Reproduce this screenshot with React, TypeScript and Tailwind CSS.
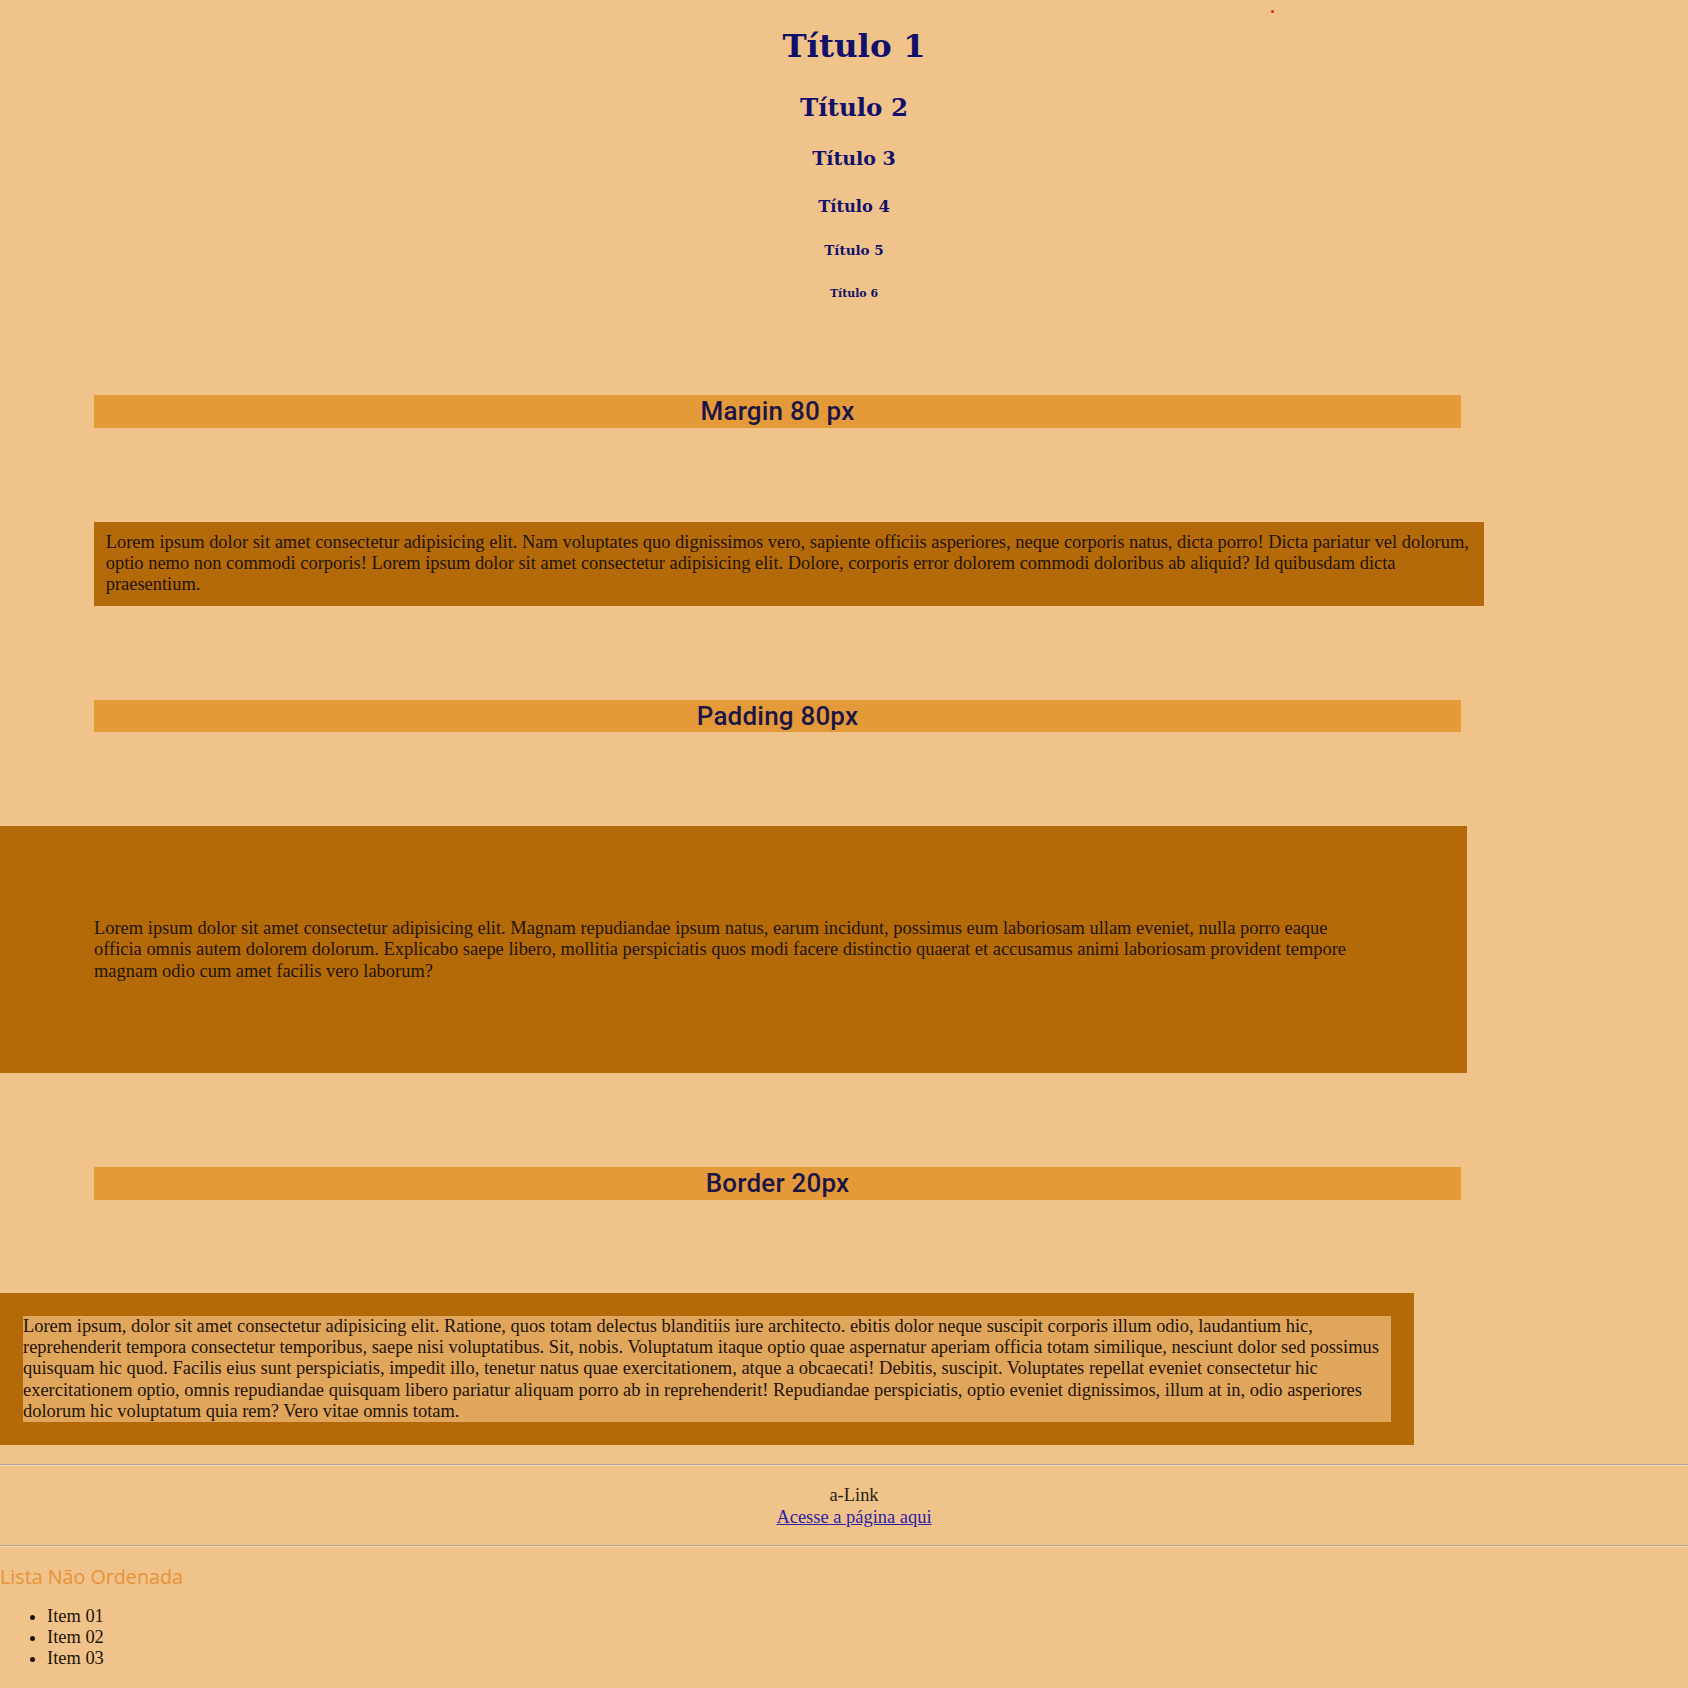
import React from "react";

const headings = [
  { tag: "h1", text: "Título 1", cls: "mt-[24px] text-[32.5px] leading-[43px]" },
  { tag: "h2", text: "Título 2", cls: "mt-[25px] text-[24.5px] leading-[32px]" },
  { tag: "h3", text: "Título 3", cls: "mt-[21.5px] text-[19px] leading-[25px]" },
  { tag: "h4", text: "Título 4", cls: "mt-[25px] text-[16.3px] leading-[21px]" },
  { tag: "h5", text: "Título 5", cls: "mt-[24.5px] text-[13.5px] leading-[18px]" },
  { tag: "h6", text: "Título 6", cls: "mt-[28px] text-[10.9px] leading-[14px]" },
];

const serif = "font-['Liberation_Serif','Times_New_Roman',serif]";

function Bar({ label }: { label: string }) {
  return (
    <h2 className="mt-[94px] ml-[94px] w-[1367px] h-[32.5px] bg-[#e59a3a] flex items-center justify-center font-['Roboto','Liberation_Sans',Arial,sans-serif] font-medium text-[26px] tracking-[0.2px] text-[#1d1545]">
      {label}
    </h2>
  );
}

export default function App() {
  return (
    <div className={`relative flow-root min-h-screen bg-[#efc389] text-[#1f1409] text-[18.45px] leading-[21.3px] ${serif}`}>
      {/* stray red dot */}
      <span className="absolute top-[10px] left-[1271px] w-[3px] h-[3px] rounded-full bg-[#e02020]" />

      {/* Headings */}
      <div className="pl-[20px] text-center font-['DejaVu_Serif',Georgia,serif] font-bold text-[#12106a]">
        {headings.map((h) => {
          const Tag = h.tag as any;
          return (
            <Tag key={h.text} className={h.cls}>
              {h.text}
            </Tag>
          );
        })}
      </div>

      <Bar label="Margin 80 px" />
      <p className="mt-[94px] ml-[94px] w-[1390px] px-[11.7px] py-[10.3px] bg-[#b46a08]">
        Lorem ipsum dolor sit amet consectetur adipisicing elit. Nam voluptates quo dignissimos vero, sapiente officiis
        asperiores, neque corporis natus, dicta porro! Dicta pariatur vel dolorum, optio nemo non commodi corporis! Lorem
        ipsum dolor sit amet consectetur adipisicing elit. Dolore, corporis error dolorem commodi doloribus ab aliquid? Id
        quibusdam dicta praesentium.
      </p>

      <Bar label="Padding 80px" />
      <p className="mt-[94px] w-[1467px] px-[94px] py-[91.5px] bg-[#b46a08]">
        Lorem ipsum dolor sit amet consectetur adipisicing elit. Magnam repudiandae ipsum natus, earum incidunt,
        possimus eum laboriosam ullam eveniet, nulla porro eaque officia omnis autem dolorem dolorum. Explicabo saepe
        libero, mollitia perspiciatis quos modi facere distinctio quaerat et accusamus animi laboriosam provident tempore
        magnam odio cum amet facilis vero laborum?
      </p>

      <Bar label="Border 20px" />
      <p className="mt-[93px] w-[1414px] border-[23.4px] border-[#b46a08] bg-[#e0a65c]">
        Lorem ipsum, dolor sit amet consectetur adipisicing elit. Ratione, quos totam delectus blanditiis iure
        architecto. ebitis dolor neque suscipit corporis illum odio, laudantium hic, reprehenderit tempora consectetur
        temporibus, saepe nisi voluptatibus. Sit, nobis. Voluptatum itaque optio quae aspernatur aperiam officia totam
        similique, nesciunt dolor sed possimus quisquam hic quod. Facilis eius sunt perspiciatis, impedit illo, tenetur
        natus quae exercitationem, atque a obcaecati! Debitis, suscipit. Voluptates repellat eveniet consectetur hic
        exercitationem optio, omnis repudiandae quisquam libero pariatur aliquam porro ab in reprehenderit! Repudiandae
        perspiciatis, optio eveniet dignissimos, illum at in, odio asperiores dolorum hic voluptatum quia rem? Vero vitae
        omnis totam.
      </p>

      <hr className="mt-[19px] h-0 border-t border-b border-[#aea597] border-b-[#f6dcb6]" />
      <div className="mt-[19px] mb-[17px] pl-[20px] text-center text-[#2a1f10]">
        <p>a-Link</p>
        <a href="#" className="text-[#2d22a8] underline">
          Acesse a página aqui
        </a>
      </div>
      <hr className="h-0 border-t border-b border-[#aea597] border-b-[#f6dcb6]" />

      {/* Lista */}
      <p className="mt-[17px] font-['Open_Sans','Noto_Sans',sans-serif] text-[19.7px] leading-[26px] text-[#e8923a]">
        Lista Não Ordenada
      </p>
      <ul className="mt-[16px] pl-[47px] list-disc leading-[21px]">
        <li>Item 01</li>
        <li>Item 02</li>
        <li>Item 03</li>
      </ul>
    </div>
  );
}
